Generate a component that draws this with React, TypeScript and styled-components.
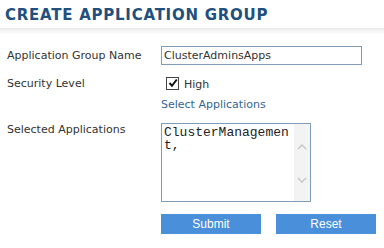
import styled, { createGlobalStyle } from 'styled-components';

const GlobalStyle = createGlobalStyle`
  body {
    margin: 0;
    background: #ffffff;
    font-family: "DejaVu Sans", Verdana, sans-serif;
  }
`;

const Page = styled.main`
  width: 384px;
  height: 248px;
  overflow: hidden;
`;

const Header = styled.header`
  height: 28px;
  padding-left: 5px;
  display: flex;
  align-items: center;
  padding-top: 1px;
  box-sizing: border-box;
`;

const Title = styled.h1`
  margin: 0;
  font-family: "DejaVu Sans", Verdana, sans-serif;
  font-size: 15px;
  font-weight: 700;
  letter-spacing: 0.75px;
  color: #21507e;
`;

const Shadow = styled.div`
  height: 6px;
  background: linear-gradient(#e9e9e9, #ffffff);
`;

const Form = styled.form`
  display: flex;
  flex-direction: column;
  padding: 12px 0 0 7px;
`;

const Row = styled.div<{ $height: number; $top?: number; $align?: string }>`
  display: flex;
  align-items: ${(p) => p.$align || 'center'};
  height: ${(p) => p.$height}px;
  margin-top: ${(p) => p.$top || 0}px;
`;

const Label = styled.label`
  width: 154px;
  flex-shrink: 0;
  font-size: 11px;
  color: #333333;
`;

const TextInput = styled.input`
  width: 201px;
  height: 19px;
  box-sizing: border-box;
  border: 1px solid #7f9db9;
  padding: 0 2px;
  font-family: "DejaVu Sans", Verdana, sans-serif;
  font-size: 11px;
  color: #333333;
  outline: none;
`;

const CheckWrap = styled.span`
  display: flex;
  align-items: center;
  gap: 5px;
  margin-left: 5px;
  font-size: 11px;
  color: #333333;
`;

const CheckBox = styled.span`
  width: 11px;
  height: 11px;
  border: 1px solid #444444;
  background: #ffffff;
  display: flex;
  align-items: center;
  justify-content: center;
`;

const HighText = styled.span`
  padding-top: 3px;
`;

const Link = styled.a`
  margin-left: 154px;
  font-size: 11px;
  color: #2f6698;
  text-decoration: none;
`;

const AreaBox = styled.div`
  width: 150px;
  height: 79px;
  box-sizing: border-box;
  border: 1px solid #7f9db9;
  display: flex;
`;

const Area = styled.textarea`
  width: 132px;
  height: 100%;
  box-sizing: border-box;
  border: none;
  padding: 2px 0 0 2px;
  resize: none;
  overflow: hidden;
  font-family: "Liberation Mono", "Courier New", monospace;
  font-size: 13px;
  line-height: 13px;
  color: #222222;
  outline: none;
`;

const Track = styled.div`
  width: 16px;
  background: #f3f3f3;
  display: flex;
  flex-direction: column;
  align-items: center;
  justify-content: space-between;
  padding: 20px 0 18px;
  box-sizing: border-box;
`;

const Buttons = styled.div`
  display: flex;
  gap: 15px;
  margin: 12px 0 0 154px;
`;

const Button = styled.button`
  width: 100px;
  height: 20px;
  border: none;
  background: #4a8fd9;
  color: #ffffff;
  font-family: "Liberation Sans", Arial, sans-serif;
  font-size: 12px;
  padding: 0;
`;

function Chevron({ up }: { up?: boolean }) {
  return (
    <svg width='10' height='6' viewBox='0 0 10 6'>
      <polyline
        points={up ? '1,5 5,1 9,5' : '1,1 5,5 9,1'}
        fill='none'
        stroke='#c4c4c4'
        strokeWidth='1.4'
      />
    </svg>
  );
}

function App() {
  return (
    <Page>
      <GlobalStyle />
      <Header>
        <Title>CREATE APPLICATION GROUP</Title>
      </Header>
      <Shadow />
      <Form>
        <Row $height={19}>
          <Label>Application Group Name</Label>
          <TextInput defaultValue='ClusterAdminsApps' />
        </Row>
        <Row $height={16} $top={10}>
          <Label>Security Level</Label>
          <CheckWrap>
            <CheckBox>
              <svg width='10' height='10' viewBox='0 0 10 10'>
                <polyline
                  points='1.5,5 4,7.8 8.8,1.5'
                  fill='none'
                  stroke='#111111'
                  strokeWidth='2'
                />
              </svg>
            </CheckBox>
            <HighText>High</HighText>
          </CheckWrap>
        </Row>
        <Row $height={16} $top={5}>
          <Link href='#'>Select Applications</Link>
        </Row>
        <Row $height={79} $top={11} $align='flex-start'>
          <Label>Selected Applications</Label>
          <AreaBox>
            <Area defaultValue='ClusterManagement,' />
            <Track>
              <Chevron up />
              <Chevron />
            </Track>
          </AreaBox>
        </Row>
        <Buttons>
          <Button type='button'>Submit</Button>
          <Button type='button'>Reset</Button>
        </Buttons>
      </Form>
    </Page>
  );
}

export default App;
